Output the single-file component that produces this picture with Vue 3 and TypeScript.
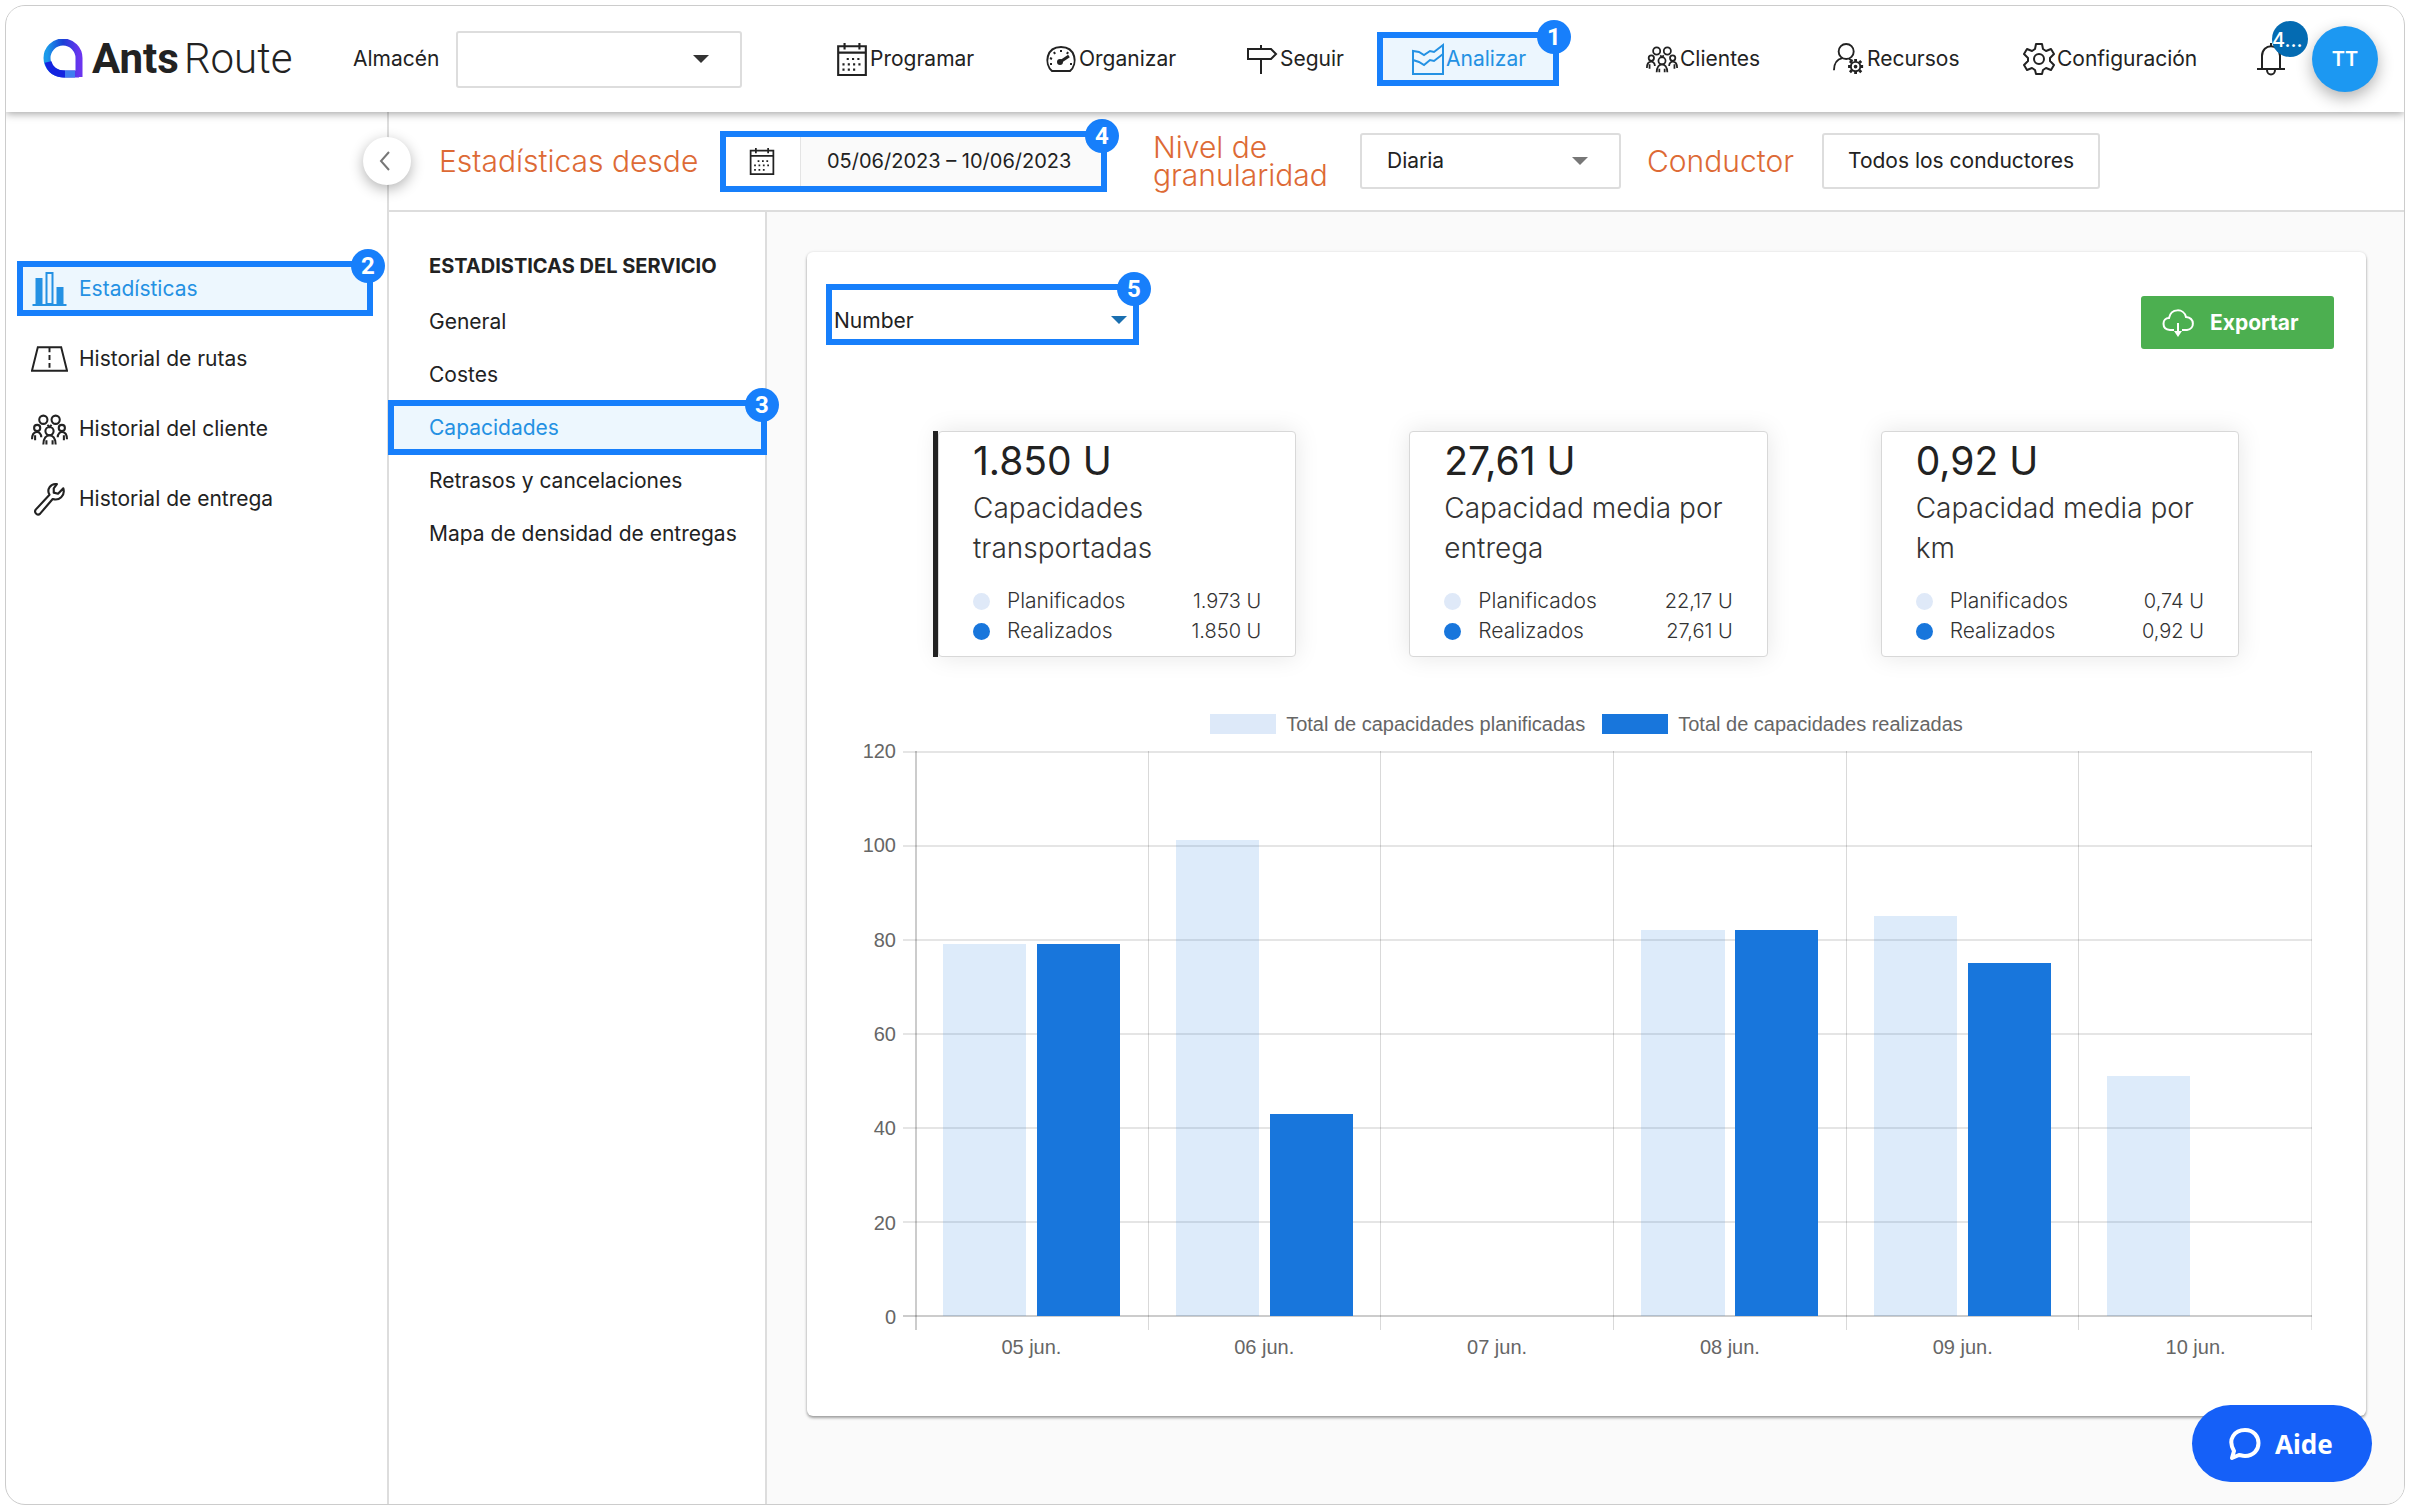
<script setup lang="ts">
import { ref } from 'vue'

interface NavItem { id: string; label: string; step?: number }
interface Stat { value: string; label: string; planned: string; done: string; selected?: boolean }
interface Day { label: string; planned: number; done: number }

const navItems: NavItem[] = [
  { id: 'calendar', label: 'Programar' },
  { id: 'gauge', label: 'Organizar' },
  { id: 'sign', label: 'Seguir' },
  { id: 'chart', label: 'Analizar', step: 1 },
  { id: 'people', label: 'Clientes' },
  { id: 'usergear', label: 'Recursos' },
  { id: 'gear', label: 'Configuración' },
]

const sideItems: NavItem[] = [
  { id: 'bars', label: 'Estadísticas', step: 2 },
  { id: 'road', label: 'Historial de rutas' },
  { id: 'people', label: 'Historial del cliente' },
  { id: 'wrench', label: 'Historial de entrega' },
]

const serviceItems: NavItem[] = [
  { id: 'general', label: 'General' },
  { id: 'costs', label: 'Costes' },
  { id: 'capacity', label: 'Capacidades', step: 3 },
  { id: 'delays', label: 'Retrasos y cancelaciones' },
  { id: 'density', label: 'Mapa de densidad de entregas' },
]

const stats: Stat[] = [
  { value: '1.850 U', label: 'Capacidades transportadas', planned: '1.973 U', done: '1.850 U', selected: true },
  { value: '27,61 U', label: 'Capacidad media por entrega', planned: '22,17 U', done: '27,61 U' },
  { value: '0,92 U', label: 'Capacidad media por km', planned: '0,74 U', done: '0,92 U' },
]

const axisMax = 120
const ticks = [120, 100, 80, 60, 40, 20, 0]
const days: Day[] = [
  { label: '05 jun.', planned: 79, done: 79 },
  { label: '06 jun.', planned: 101, done: 43 },
  { label: '07 jun.', planned: 0, done: 0 },
  { label: '08 jun.', planned: 82, done: 82 },
  { label: '09 jun.', planned: 85, done: 75 },
  { label: '10 jun.', planned: 51, done: 0 },
]

const height = (n: number): string => `${(n / axisMax) * 100}%`

const warehouse = ref('')
const granularity = ref('Diaria')
const unit = ref('Number')
const range = ref('05/06/2023 – 10/06/2023')
</script>

<template>
  <svg class="sprite" aria-hidden="true">
    <symbol id="i-calendar" viewBox="0 0 30 32">
      <g fill="none" stroke="currentColor" stroke-width="2">
        <path d="M2 4h26v27H2zM2 10h26M8 1v6M22 1v6" />
        <path d="M10 16h15M6 21h19M6 26h14" stroke-dasharray="2 3" />
      </g>
    </symbol>
    <symbol id="i-gauge" viewBox="0 0 32 32">
      <g fill="none" stroke="currentColor" stroke-width="2">
        <path d="M7 28C-1 21 1 4 16 4s17 17 9 24z" stroke-linejoin="round" />
        <path d="M16 7v2M9 9l1 2M5 15l2 1M5 21h2M23 9l-1 2M25 21h2" />
        <circle cx="15" cy="19" r="2" fill="currentColor" />
        <path d="M15 19l9-6" stroke-width="3" />
      </g>
    </symbol>
    <symbol id="i-sign" viewBox="0 0 32 32">
      <path d="M2 6h23l5 5-5 5H2zM15 2v4M15 16v15" fill="none" stroke="currentColor" stroke-width="2" />
    </symbol>
    <symbol id="i-chart" viewBox="0 0 32 32">
      <path d="M1 8v23h30V2l-9 7-4-1-6 4-5-3zM1 17l6 2 5 3 6-5 4 1 9-7" fill="none" stroke="currentColor" stroke-width="2" />
    </symbol>
    <symbol id="i-people" viewBox="0 0 36 32">
      <g fill="none" stroke="currentColor" stroke-width="2">
        <circle cx="12" cy="7" r="4" /><circle cx="24" cy="7" r="4" />
        <circle cx="6" cy="15" r="3" /><circle cx="30" cy="15" r="3" />
        <circle cx="18" cy="18" r="4" />
        <path d="M1 26c0-9 9-9 9-2M35 26c0-9-9-9-9-2M12 31c0-12 12-12 12 0M4 22v5M32 22v5M15 27v4M21 27v4M16 12l2 2 2-2" />
      </g>
    </symbol>
    <symbol id="i-usergear" viewBox="0 0 34 36">
      <g fill="none" stroke="currentColor" stroke-width="2">
        <circle cx="14" cy="10" r="8" />
        <path d="M1 30c0-8 4-12 9-13M17 18l4 2" />
        <circle cx="24" cy="26" r="5" />
        <path d="M24 18v3M24 31v3M16 26h3M29 26h3M18 20l2 2M28 30l2 2M30 20l-2 2M20 30l-2 2" stroke-width="3" />
        <circle cx="24" cy="26" r="1" />
      </g>
    </symbol>
    <symbol id="i-gear" viewBox="0 0 32 34">
      <g fill="none" stroke="currentColor" stroke-width="2" stroke-linejoin="round">
        <path d="M13 2h6l1 5 3 2 5-2 3 5-4 4v3l4 4-3 5-5-2-3 2-1 4h-6l-1-4-3-2-5 2-3-5 4-4v-3l-4-4 3-5 5 2 3-2z" />
        <circle cx="16" cy="17" r="5" />
      </g>
    </symbol>
    <symbol id="i-bars" viewBox="0 0 34 34">
      <path d="M0 32h34v2H0zM3 6h7v26H3zM24 15h7v17h-7z" fill="currentColor" />
      <path d="M14 1h6v31h-6z" fill="none" stroke="currentColor" stroke-width="2" />
    </symbol>
    <symbol id="i-road" viewBox="0 0 38 28">
      <path d="M7 2h24l6 24H1z" fill="none" stroke="currentColor" stroke-width="2" />
      <path d="M19 2v24" stroke="currentColor" stroke-width="2" stroke-dasharray="5 3" />
    </symbol>
    <symbol id="i-wrench" viewBox="0 0 30 32">
      <path d="M22 2c-6-1-10 5-7 10L2 26c-2 3 2 6 4 4l12-14c6 2 12-3 10-10l-5 5-4-1 0-4z" fill="none" stroke="currentColor" stroke-width="2" stroke-linejoin="round" />
    </symbol>
  </svg>

  <div class="app">
    <header class="topbar">
      <a class="logo" href="#" aria-label="AntsRoute">
        <svg class="logo-mark" viewBox="0 0 40 40" aria-hidden="true">
          <defs>
            <linearGradient id="mark" x1="0" y1="0" x2="1" y2="0">
              <stop offset="0" stop-color="#1b9bea" />
              <stop offset="0.5" stop-color="#1a3fd6" />
              <stop offset="1" stop-color="#6a35ef" />
            </linearGradient>
          </defs>
          <path d="M36 38V19A16 16 0 1 0 20 35h16" fill="none" stroke="url(#mark)" stroke-width="7" />
          <path d="M5 23c2 8 8 12 17 12" fill="none" stroke="#1424e0" stroke-width="7" />
          <path d="M22 35h10" stroke="#3f7df0" stroke-width="7" />
        </svg>
        <span class="logo-text"><b>Ants</b>Route</span>
      </a>
      <label class="warehouse-label" for="warehouse">Almacén</label>
      <div class="select warehouse">
        <select id="warehouse" v-model="warehouse"><option value=""></option></select>
        <svg class="caret dark" viewBox="0 0 16 8"><path d="M0 0h16l-8 8z" fill="currentColor" /></svg>
      </div>
      <nav class="nav">
        <a v-for="item in navItems" :key="item.label" href="#" class="nav-item" :class="{ marked: item.step }">
          <svg class="icon"><use :href="'#i-' + item.id" /></svg>
          <span>{{ item.label }}</span>
          <span v-if="item.step" class="step">{{ item.step }}</span>
        </a>
      </nav>
      <button class="bell" type="button" aria-label="Notificaciones">
        <svg viewBox="0 0 28 34"><path d="M5 27V14c0-13 18-13 18 0v13M0 27h28M14 1v3M10 28c0 6 8 6 8 0" fill="none" stroke="currentColor" stroke-width="2" /></svg>
        <span class="count">4...</span>
      </button>
      <button class="avatar" type="button">TT</button>
    </header>

    <div class="body">
      <aside class="side">
        <a v-for="item in sideItems" :key="item.label" href="#" class="side-item" :class="{ marked: item.step }">
          <svg class="icon"><use :href="'#i-' + item.id" /></svg>
          <span>{{ item.label }}</span>
          <span v-if="item.step" class="step">{{ item.step }}</span>
        </a>
      </aside>

      <div class="main">
        <button class="collapse" type="button" aria-label="Contraer menú">
          <svg viewBox="0 0 12 20"><path d="M10 1L2 10l8 9" fill="none" stroke="currentColor" stroke-width="2" /></svg>
        </button>
        <div class="filters">
          <label class="title" for="range">Estadísticas desde</label>
          <div class="range marked">
            <svg class="range-icon" aria-hidden="true"><use href="#i-calendar" /></svg>
            <input id="range" v-model="range" type="text" readonly />
            <span class="step">4</span>
          </div>
          <label class="title granularity-label" for="granularity">Nivel de granularidad</label>
          <div class="select granularity">
            <select id="granularity" v-model="granularity"><option>Diaria</option></select>
            <svg class="caret" viewBox="0 0 16 8"><path d="M0 0h16l-8 8z" fill="currentColor" /></svg>
          </div>
          <label class="title driver-label" for="driver">Conductor</label>
          <button id="driver" class="driver" type="button">Todos los conductores</button>
        </div>

        <div class="workspace">
          <nav class="service">
            <h2>ESTADISTICAS DEL SERVICIO</h2>
            <a v-for="item in serviceItems" :key="item.id" href="#" class="service-item" :class="{ marked: item.step }">
              {{ item.label }}
              <span v-if="item.step" class="step">{{ item.step }}</span>
            </a>
          </nav>

          <main class="content">
            <section class="card">
              <div class="toolbar">
                <div class="unit marked">
                  <select v-model="unit" aria-label="Unidad"><option>Number</option></select>
                  <svg class="caret blue" viewBox="0 0 16 8"><path d="M0 0h16l-8 8z" fill="currentColor" /></svg>
                  <span class="step">5</span>
                </div>
                <button class="export" type="button">
                  <svg viewBox="0 0 32 28"><path d="M12 21H8C-1 20 0 9 7 9 9-1 22-1 24 8c9 1 9 12 1 13h-5M16 14v10" fill="none" stroke="currentColor" stroke-width="2" /><path d="M12 22h8l-4 6z" fill="currentColor" /></svg>
                  Exportar
                </button>
              </div>

              <div class="stats">
                <article v-for="s in stats" :key="s.label" class="stat" :class="{ selected: s.selected }">
                  <strong>{{ s.value }}</strong>
                  <p>{{ s.label }}</p>
                  <dl>
                    <div><dt class="planned">Planificados</dt><dd>{{ s.planned }}</dd></div>
                    <div><dt class="done">Realizados</dt><dd>{{ s.done }}</dd></div>
                  </dl>
                </article>
              </div>

              <div class="legend">
                <span class="key planned">Total de capacidades planificadas</span>
                <span class="key done">Total de capacidades realizadas</span>
              </div>
              <div class="chart">
                <div class="axis"><span v-for="t in ticks" :key="t">{{ t }}</span></div>
                <div class="plot">
                  <div class="rows"><i v-for="t in ticks" :key="t"></i></div>
                  <div class="cols"><i v-for="d in days" :key="d.label"></i></div>
                  <div class="bars">
                    <div v-for="d in days" :key="d.label" class="day">
                      <div class="bar planned" :style="{ height: height(d.planned) }"></div>
                      <div class="bar done" :style="{ height: height(d.done) }"></div>
                    </div>
                  </div>
                </div>
                <div class="dates"><span v-for="d in days" :key="d.label">{{ d.label }}</span></div>
              </div>
            </section>
          </main>
        </div>
      </div>
    </div>

    <button class="help" type="button">
      <svg viewBox="0 0 32 34"><path d="M3 31l2-7C-2 12 6 3 16 3c18 0 18 26 0 26-3 0-5-1-6-1z" fill="none" stroke="currentColor" stroke-width="4" stroke-linejoin="round" /></svg>
      Aide
    </button>
  </div>
</template>

<style>
body { background: #fff; }
</style>

<style scoped>
.app, .app * { box-sizing: border-box; }
.app {
  position: relative;
  display: flex;
  flex-direction: column;
  min-height: calc(100vh - 10px);
  margin: 5px 4px 5px 5px;
  border: 1px solid #ccc;
  border-radius: 20px;
  overflow: hidden;
  background: #fff;
  color: #222;
  font: 21px/24px Inter, sans-serif;
}
.sprite { position: absolute; width: 0; height: 0; }
a { color: inherit; text-decoration: none; }
button, input, select { font: inherit; color: inherit; border: 0; padding: 0; background: none; }
select { appearance: none; width: 100%; height: 100%; outline: 0; }

.marked { position: relative; border: 6px solid #177ffb; }
.step {
  position: absolute;
  top: -18px;
  right: -18px;
  width: 34px;
  height: 34px;
  border-radius: 50%;
  background: #177ffb;
  color: #fff;
  font: bold 24px/34px Roboto, sans-serif;
  text-align: center;
}

.topbar {
  position: relative;
  z-index: 2;
  display: flex;
  align-items: center;
  height: 106px;
  padding: 0 26px 0 37px;
  background: #fff;
  box-shadow: 0 2px 8px rgba(0, 0, 0, 0.35);
}
.logo { display: flex; align-items: center; width: 310px; flex: none; }
.logo-mark { width: 40px; height: 40px; margin-right: 9px; }
.logo-text { font: 300 42px/50px Roboto, sans-serif; }
.logo-text b { font-weight: 700; margin-right: 5px; }
.warehouse-label { width: 103px; flex: none; }
.select { position: relative; flex: none; border: 2px solid #ddd; border-radius: 3px; }
.warehouse { width: 286px; height: 57px; margin-right: 94px; }
.caret { position: absolute; right: 31px; top: 50%; width: 16px; height: 8px; margin-top: -4px; color: #777; pointer-events: none; }
.caret.dark { color: #333; }
.caret.blue { color: #1a6fb0; right: 6px; }
.nav {
  flex: 1;
  display: grid;
  grid-template-columns: 209fr 201fr 131fr 269fr 187fr 190fr 234fr;
  align-items: center;
}
.nav-item { display: flex; align-items: center; gap: 2px; height: 54px; white-space: nowrap; }
.nav-item .icon { width: 32px; height: 34px; flex: none; }
.nav-item.marked { width: 182px; padding-left: 29px; background: #ecf6fe; color: #2491e3; }
.bell { position: relative; width: 28px; height: 34px; margin: 0 27px 0 0; }
.bell svg { width: 28px; height: 34px; display: block; }
.count {
  position: absolute;
  left: 15px;
  top: -21px;
  width: 36px;
  height: 36px;
  border-radius: 50%;
  background: #046bb2;
  color: #fff;
  font-size: 20px;
  font-weight: 500;
  line-height: 38px;
  text-align: left;
}
.avatar {
  width: 66px;
  height: 66px;
  border-radius: 50%;
  background: #1c98f2;
  color: #fff;
  font-size: 20px;
  font-weight: 600;
  box-shadow: 0 6px 16px rgba(0, 0, 0, 0.3);
}

.body { flex: 1; display: flex; }
.side { width: 381px; flex: none; padding: 149px 14px 0 11px; display: flex; flex-direction: column; gap: 15px; }
.side-item { display: flex; align-items: center; gap: 11px; height: 55px; padding-left: 14px; }
.side-item .icon { width: 37px; height: 34px; flex: none; }
.side-item.marked { padding-left: 8px; background: #edf7fe; color: #2491e3; }

.main { position: relative; flex: 1; display: flex; flex-direction: column; border-left: 2px solid #ddd; }
.collapse {
  position: absolute;
  left: -26px;
  top: 25px;
  width: 48px;
  height: 48px;
  border-radius: 50%;
  background: #fff;
  color: #777;
  box-shadow: 0 4px 14px rgba(0, 0, 0, 0.3);
}
.collapse svg { width: 12px; height: 20px; display: block; margin: 0 auto 0 16px; }
.filters { display: flex; align-items: center; height: 100px; padding-left: 50px; border-bottom: 2px solid #ddd; }
.title { color: #dd6a35; font-size: 30px; line-height: 28px; font-weight: 300; white-space: nowrap; width: 281px; flex: none; }
.range { display: flex; width: 387px; height: 61px; flex: none; }
.range-icon { width: 74px; height: 28px; padding: 0 22px 0 20px; margin: 10px 0; flex: none; }
.range input { flex: 1; min-width: 0; padding-left: 26px; background: #fafafa; border-left: 1px solid #e4e4e4; outline: 0; font-size: 20px; }
.granularity-label { width: 207px; margin-left: 46px; white-space: normal; }
.granularity { width: 261px; height: 56px; }
.granularity select { padding-left: 25px; }
.driver-label { width: 175px; margin-left: 26px; }
.driver { width: 278px; height: 56px; border: 2px solid #ddd; border-radius: 3px; }

.workspace { flex: 1; display: flex; }
.service { width: 379px; flex: none; margin-left: -1px; padding-top: 42px; border-right: 2px solid #ddd; }
.service h2 { margin: 0 0 17px; padding-left: 41px; font-size: 20px; line-height: 24px; font-weight: 700; white-space: nowrap; }
.service-item { display: flex; align-items: center; height: 53px; padding-left: 41px; white-space: nowrap; }
.service-item.marked { height: 55px; margin: -1px -2px -1px 0; padding-left: 35px; background: #edf7fe; color: #2491e3; }

.content { flex: 1; min-width: 0; padding: 40px 38px 80px 40px; background: #fafafa; }
.card { padding-bottom: 57px; border-radius: 6px; background: #fff; box-shadow: 0 2px 3px rgba(0, 0, 0, 0.35), 0 0 3px rgba(0, 0, 0, 0.1); }
.toolbar { display: flex; justify-content: space-between; padding: 32px 32px 0 19px; }
.unit { width: 313px; height: 61px; }
.unit select { padding: 12px 0 0 2px; }
.unit .caret { margin-top: 1px; }
.export {
  display: flex;
  align-items: center;
  gap: 16px;
  width: 193px;
  height: 53px;
  margin-top: 12px;
  padding-left: 21px;
  border-radius: 3px;
  background: #4caf50;
  color: #fff;
  font-weight: 700;
}
.export svg { width: 32px; height: 28px; }

.stats { display: grid; grid-template-columns: repeat(3, 1fr); gap: 113px; padding: 82px 127px 0 131px; }
.stat { position: relative; padding: 5px 34px 10px; border: 1px solid #d8d8d8; border-radius: 4px; box-shadow: 0 0 24px rgba(0, 0, 0, 0.1); background: #fff; }
.stat.selected::before { content: ''; position: absolute; left: -6px; top: -1px; bottom: -1px; width: 5px; background: #222; }
.stat strong { display: block; font-size: 39px; line-height: 48px; font-weight: 400; }
.stat p { margin: 3px -10px 18px 0; font-size: 28px; line-height: 40px; font-weight: 300; color: #333; }
.stat dl { margin: 0; font-weight: 300; line-height: 30px; color: #333; }
.stat dl div { display: flex; justify-content: space-between; }
.stat dt { display: flex; align-items: center; gap: 17px; }
.stat dt::before { content: ''; width: 17px; height: 17px; border-radius: 50%; background: #dfe9f8; }
.stat dt.done::before { background: #1876dc; }
.stat dd { margin: 0; font-size: 20px; }

.legend, .chart { font-family: "Liberation Sans", sans-serif; font-size: 20px; color: #666; }
.legend { display: flex; justify-content: center; gap: 17px; margin-top: 55px; }
.key { display: flex; align-items: center; gap: 10px; }
.key::before { content: ''; width: 66px; height: 20px; background: #dde9f9; }
.key.done::before { background: #1876dc; }
.chart { display: grid; grid-template-columns: 89px 1fr; column-gap: 19px; margin-top: 15px; padding-right: 54px; }
.axis { display: flex; flex-direction: column; justify-content: space-between; margin: -12px 0; text-align: right; }
.plot { display: grid; height: 566px; }
.plot > div { grid-area: 1 / 1; }
.rows { display: flex; flex-direction: column; justify-content: space-between; margin-left: -12px; }
.rows i { height: 2px; background: rgba(0, 0, 0, 0.1); }
.rows i:last-child { background: rgba(0, 0, 0, 0.2); }
.cols { display: grid; grid-template-columns: repeat(6, 1fr); margin-bottom: -13px; border-right: 1px solid rgba(0, 0, 0, 0.1); }
.cols i { border-left: 1px solid rgba(0, 0, 0, 0.15); }
.cols i:first-child { border-left: 2px solid rgba(0, 0, 0, 0.2); }
.bars, .dates { display: grid; grid-template-columns: repeat(6, 1fr); }
.bars { padding-bottom: 1px; }
.day { display: flex; align-items: flex-end; justify-content: space-between; padding: 0 12%; }
.bar { width: 47%; }
.bar.planned { background: rgba(24, 118, 220, 0.15); }
.bar.done { background: #1876dc; }
.dates { grid-column: 2; margin-top: 18px; text-align: center; }

.help {
  position: absolute;
  right: 32px;
  bottom: 22px;
  display: flex;
  align-items: center;
  gap: 14px;
  width: 180px;
  height: 77px;
  padding-left: 37px;
  border-radius: 39px;
  background: #1560f8;
  color: #fff;
  font: bold 26px/32px "Noto Sans", sans-serif;
}
.help svg { width: 32px; height: 34px; }
</style>
